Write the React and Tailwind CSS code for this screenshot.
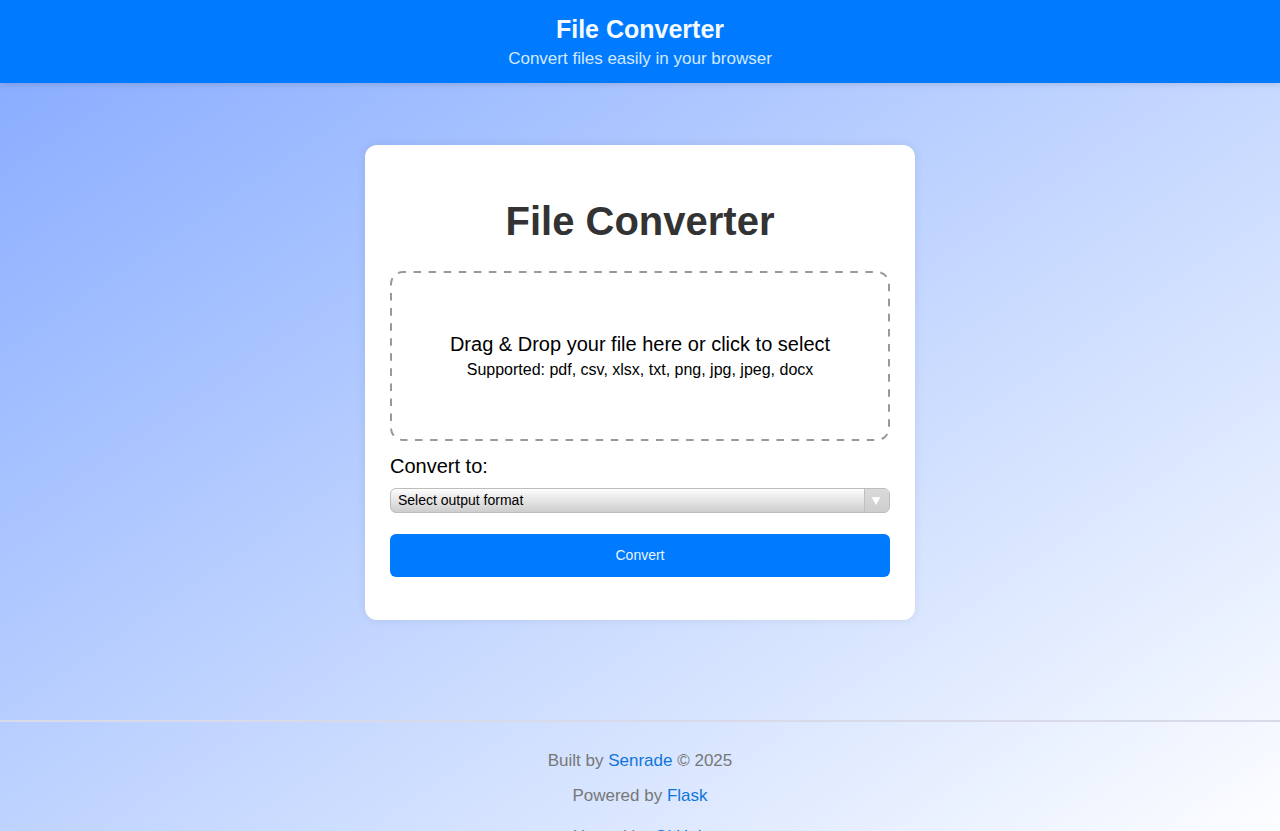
import React, { useState } from "react";

const formats = ["pdf", "csv", "xlsx", "txt", "png", "jpg", "jpeg", "docx"];

function Header() {
  return (
    <header className="relative bg-[#007bff] px-5 pt-[13px] pb-3 text-center shadow-[0_2px_5px_rgba(0,0,0,0.1)]">
      <p className="text-[25px] leading-8 font-bold text-[#f4faff]">File Converter</p>
      <p className="mt-0.5 text-[17px] leading-6 text-[#d3e9ff]">Convert files easily in your browser</p>
    </header>
  );
}

function DropZone() {
  return (
    <label
      htmlFor="file"
      className="relative flex h-[170px] cursor-pointer flex-col items-center justify-center text-center text-black"
    >
      <svg className="absolute inset-0 h-full w-full" aria-hidden="true" fill="none">
        <rect
          x="1"
          y="1"
          rx="12"
          className="h-[calc(100%-2px)] w-[calc(100%-2px)]"
          stroke="#999"
          strokeWidth="2"
          strokeDasharray="7.53 7.53"
          strokeDashoffset="4.5"
        />
      </svg>
      <span className="text-[20px] leading-7">Drag &amp; Drop your file here or click to select</span>
      <span className="text-[16px] leading-6">Supported: {formats.join(", ")}</span>
      <input id="file" type="file" className="sr-only" />
    </label>
  );
}

function FormatSelect() {
  const [format, setFormat] = useState("");
  return (
    <div className="relative mt-2">
      <select
        id="format"
        value={format}
        onChange={(e) => setFormat(e.target.value)}
        className="block h-[25px] w-full appearance-none rounded-md border border-[#bdbdbd] bg-linear-to-b from-[#fdfdfd] to-[#cdcdcd] pr-8 pl-[7px] text-[14px] text-black"
      >
        <option value="">Select output format</option>
        {formats.map((f) => (
          <option key={f} value={f}>{f}</option>
        ))}
      </select>
      <span className="pointer-events-none absolute inset-y-px right-px flex w-[25px] items-center justify-center rounded-r-[5px] border-l border-[#c0c0c0] bg-linear-to-b from-[#dadada] to-[#cecece] pr-0.5">
        <svg className="h-3 w-3" viewBox="0 0 12 12" aria-hidden="true">
          <path d="M1 1.8h10L6 10.6z" fill="#fff" stroke="#c4c4c4" strokeWidth=".4" />
        </svg>
      </span>
    </div>
  );
}

export default function App() {
  return (
    <div className="flex min-h-screen flex-col bg-linear-to-br from-[#85a9ff] to-white font-['Liberation_Sans',Arial,sans-serif]">
      <Header />
      <main className="px-5 pt-[62px] pb-[100px]">
        <form
          onSubmit={(e) => e.preventDefault()}
          className="mx-auto max-w-[550px] rounded-xl bg-white px-[25px] pt-[52px] pb-[43px] shadow-[0_0_10px_rgba(0,0,0,0.08)]"
        >
          <h1 className="mb-[26px] text-center text-[40px] leading-12 font-bold text-[#333]">File Converter</h1>
          <DropZone />
          <label htmlFor="format" className="mt-[11px] block text-[20px] leading-7 text-black">Convert to:</label>
          <FormatSelect />
          <button type="submit" className="mt-[21px] block h-[43px] w-full cursor-pointer rounded-md bg-[#007bff] text-[14px] text-[#e8f4ff]">
            Convert
          </button>
        </form>
      </main>
      <footer className="flex flex-col border-t-2 border-[#d8daea] px-5 pt-[29px] pb-6 text-center text-[17px] leading-5 text-[#777]">
        <p>Built by <a href="#senrade" className="text-[#0f75dc]">Senrade</a> © 2025</p>
        <p className="mt-[15px]">Powered by <a href="#flask" className="text-[#0f75dc]">Flask</a></p>
        <p className="mt-[21px]">Hosted by <a href="#github" className="text-[#0f75dc]">GitHub</a></p>
      </footer>
    </div>
  );
}
